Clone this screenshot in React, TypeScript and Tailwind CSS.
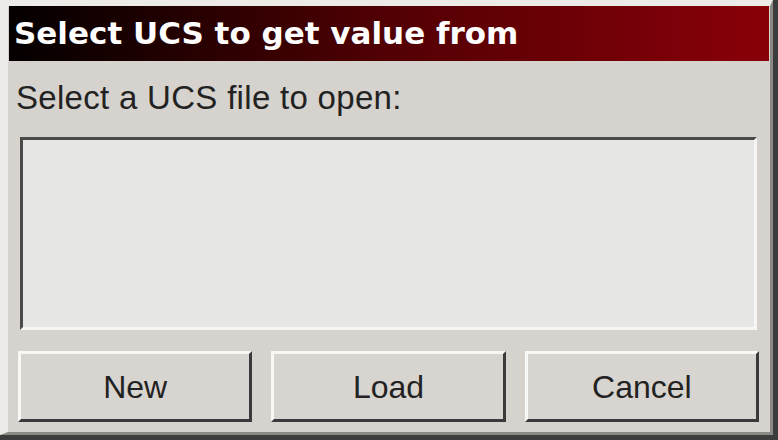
export default function App() {
  const buttons = ['New', 'Load', 'Cancel'];

  return (
    <div className="w-[778px] h-[440px] bg-[#3c3c3c] pr-[5px] pb-[5px]">
      <div className="h-full border-t-[6px] border-l-[8px] border-r-[3px] border-b-[3px] border-t-[#ecebe7] border-l-[#ecebe7] border-r-[#8a8985] border-b-[#8a8985] bg-[#d6d3ce] flex flex-col font-['Liberation_Sans',Arial,sans-serif] text-[#1c1c1c]">
        {/* title bar */}
        <div className="h-[55px] mx-px flex items-center pl-[5px] bg-gradient-to-r from-[#050000] via-[#520004] to-[#8a0008]">
          <span className="text-white font-['DejaVu_Sans',sans-serif] font-bold text-[31px] leading-none">
            Select UCS to get value from
          </span>
        </div>

        <div className="mt-[20px] pl-[8px] text-[33px] leading-none tracking-[0.3px] text-[#222]">
          Select a UCS file to open:
        </div>

        {/* file list */}
        <div className="mt-[23px] ml-[12px] mr-[13px] h-[193px] border-[3px] border-t-[#4a4a48] border-l-[#4a4a48] border-b-[#f6f6f4] border-r-[#f6f6f4] bg-[#e6e6e4]" />

        {/* buttons */}
        <div className="mt-[21px] ml-[10px] mr-[11px] grid grid-cols-3 gap-[19px]">
          {buttons.map((label) => (
            <button
              key={label}
              className="h-[71px] border-[3px] border-t-[#f8f8f6] border-l-[#f8f8f6] border-b-[#3a3a3a] border-r-[#3a3a3a] bg-[#d8d5d0] text-[32px] leading-none text-[#222]"
            >
              {label}
            </button>
          ))}
        </div>
      </div>
    </div>
  );
}
